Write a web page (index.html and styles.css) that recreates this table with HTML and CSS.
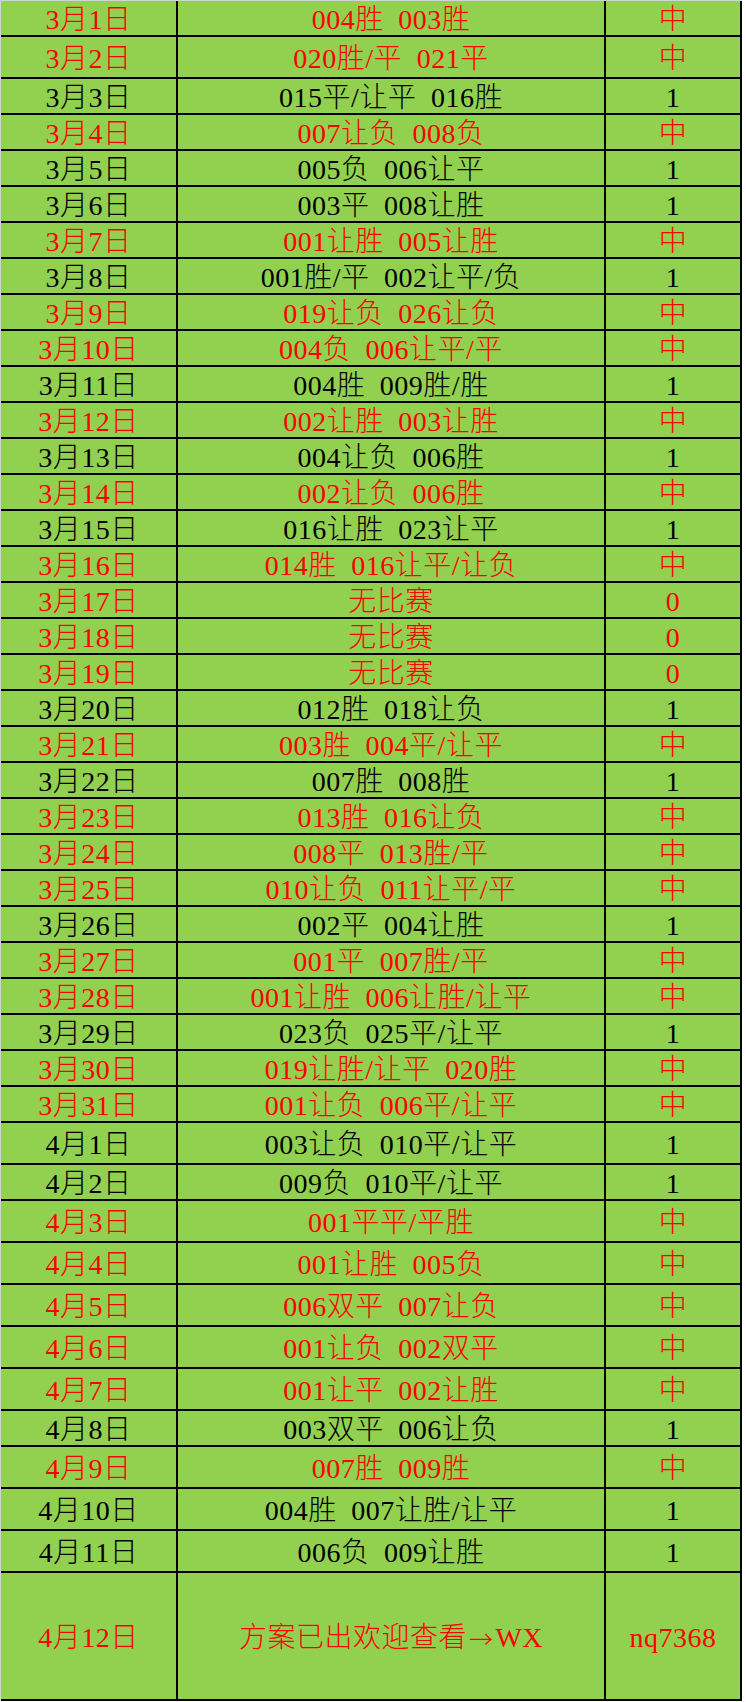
FILE: index.html
```html
<!DOCTYPE html>
<html lang="zh-CN">
<head>
<meta charset="utf-8">
<title>赛果记录</title>
<link rel="stylesheet" href="styles.css">
</head>
<body>
<div class="table">
  <div class="row red"><div class="cell">3月1日</div><div class="cell">004胜 003胜</div><div class="cell">中</div></div>
  <div class="row tall red"><div class="cell">3月2日</div><div class="cell">020胜/平 021平</div><div class="cell">中</div></div>
  <div class="row"><div class="cell">3月3日</div><div class="cell">015平/让平 016胜</div><div class="cell">1</div></div>
  <div class="row red"><div class="cell">3月4日</div><div class="cell">007让负 008负</div><div class="cell">中</div></div>
  <div class="row"><div class="cell">3月5日</div><div class="cell">005负 006让平</div><div class="cell">1</div></div>
  <div class="row"><div class="cell">3月6日</div><div class="cell">003平 008让胜</div><div class="cell">1</div></div>
  <div class="row red"><div class="cell">3月7日</div><div class="cell">001让胜 005让胜</div><div class="cell">中</div></div>
  <div class="row"><div class="cell">3月8日</div><div class="cell">001胜/平 002让平/负</div><div class="cell">1</div></div>
  <div class="row red"><div class="cell">3月9日</div><div class="cell">019让负 026让负</div><div class="cell">中</div></div>
  <div class="row red"><div class="cell">3月10日</div><div class="cell">004负 006让平/平</div><div class="cell">中</div></div>
  <div class="row"><div class="cell">3月11日</div><div class="cell">004胜 009胜/胜</div><div class="cell">1</div></div>
  <div class="row red"><div class="cell">3月12日</div><div class="cell">002让胜 003让胜</div><div class="cell">中</div></div>
  <div class="row"><div class="cell">3月13日</div><div class="cell">004让负 006胜</div><div class="cell">1</div></div>
  <div class="row red"><div class="cell">3月14日</div><div class="cell">002让负 006胜</div><div class="cell">中</div></div>
  <div class="row"><div class="cell">3月15日</div><div class="cell">016让胜 023让平</div><div class="cell">1</div></div>
  <div class="row red"><div class="cell">3月16日</div><div class="cell">014胜 016让平/让负</div><div class="cell">中</div></div>
  <div class="row red"><div class="cell">3月17日</div><div class="cell">无比赛</div><div class="cell">0</div></div>
  <div class="row red"><div class="cell">3月18日</div><div class="cell">无比赛</div><div class="cell">0</div></div>
  <div class="row red"><div class="cell">3月19日</div><div class="cell">无比赛</div><div class="cell">0</div></div>
  <div class="row"><div class="cell">3月20日</div><div class="cell">012胜 018让负</div><div class="cell">1</div></div>
  <div class="row red"><div class="cell">3月21日</div><div class="cell">003胜 004平/让平</div><div class="cell">中</div></div>
  <div class="row"><div class="cell">3月22日</div><div class="cell">007胜 008胜</div><div class="cell">1</div></div>
  <div class="row red"><div class="cell">3月23日</div><div class="cell">013胜 016让负</div><div class="cell">中</div></div>
  <div class="row red"><div class="cell">3月24日</div><div class="cell">008平 013胜/平</div><div class="cell">中</div></div>
  <div class="row red"><div class="cell">3月25日</div><div class="cell">010让负 011让平/平</div><div class="cell">中</div></div>
  <div class="row"><div class="cell">3月26日</div><div class="cell">002平 004让胜</div><div class="cell">1</div></div>
  <div class="row red"><div class="cell">3月27日</div><div class="cell">001平 007胜/平</div><div class="cell">中</div></div>
  <div class="row red"><div class="cell">3月28日</div><div class="cell">001让胜 006让胜/让平</div><div class="cell">中</div></div>
  <div class="row"><div class="cell">3月29日</div><div class="cell">023负 025平/让平</div><div class="cell">1</div></div>
  <div class="row red"><div class="cell">3月30日</div><div class="cell">019让胜/让平 020胜</div><div class="cell">中</div></div>
  <div class="row red"><div class="cell">3月31日</div><div class="cell">001让负 006平/让平</div><div class="cell">中</div></div>
  <div class="row tall"><div class="cell">4月1日</div><div class="cell">003让负 010平/让平</div><div class="cell">1</div></div>
  <div class="row"><div class="cell">4月2日</div><div class="cell">009负 010平/让平</div><div class="cell">1</div></div>
  <div class="row tall red"><div class="cell">4月3日</div><div class="cell">001平平/平胜</div><div class="cell">中</div></div>
  <div class="row tall red"><div class="cell">4月4日</div><div class="cell">001让胜 005负</div><div class="cell">中</div></div>
  <div class="row tall red"><div class="cell">4月5日</div><div class="cell">006双平 007让负</div><div class="cell">中</div></div>
  <div class="row tall red"><div class="cell">4月6日</div><div class="cell">001让负 002双平</div><div class="cell">中</div></div>
  <div class="row tall red"><div class="cell">4月7日</div><div class="cell">001让平 002让胜</div><div class="cell">中</div></div>
  <div class="row"><div class="cell">4月8日</div><div class="cell">003双平 006让负</div><div class="cell">1</div></div>
  <div class="row tall red"><div class="cell">4月9日</div><div class="cell">007胜 009胜</div><div class="cell">中</div></div>
  <div class="row tall"><div class="cell">4月10日</div><div class="cell">004胜 007让胜/让平</div><div class="cell">1</div></div>
  <div class="row tall"><div class="cell">4月11日</div><div class="cell">006负 009让胜</div><div class="cell">1</div></div>
  <div class="row final red"><div class="cell">4月12日</div><div class="cell">方案已出欢迎查看<span class="arrow">→</span>WX</div><div class="cell">nq7368</div></div>
</div>
</body>
</html>
```
FILE: styles.css
```css
html, body {
  margin: 0;
  padding: 0;
  background: #ffffff;
}

.table {
  box-sizing: border-box;
  width: 742px;
  display: flex;
  flex-direction: column;
  gap: 2px;
  background: #000000;
  border-top: 1px solid #d4d4d4;
  border-left: 1px solid #d4d4d4;
  padding: 0 2px 2px 0;
  font-family: "Liberation Serif", "Noto Sans CJK SC", serif;
  font-size: 28px;
  font-weight: 300;
  color: #000000;
}

.row {
  display: grid;
  grid-template-columns: 175px 426px 134px;
  column-gap: 2px;
  height: 34px;
}

.row.tall {
  height: 40px;
}

.row.final {
  height: 126px;
}

.row.red {
  color: #ff0000;
}

.cell {
  background: #92d050;
  display: flex;
  align-items: center;
  justify-content: center;
  line-height: 1;
  padding-top: 3px;
  box-sizing: border-box;
  white-space: nowrap;
  word-spacing: 7px;
  letter-spacing: 0.5px;
}

.arrow {
  font-family: "Noto Sans CJK SC", sans-serif;
  font-size: 24px;
  margin: 0 2px;
}
```
